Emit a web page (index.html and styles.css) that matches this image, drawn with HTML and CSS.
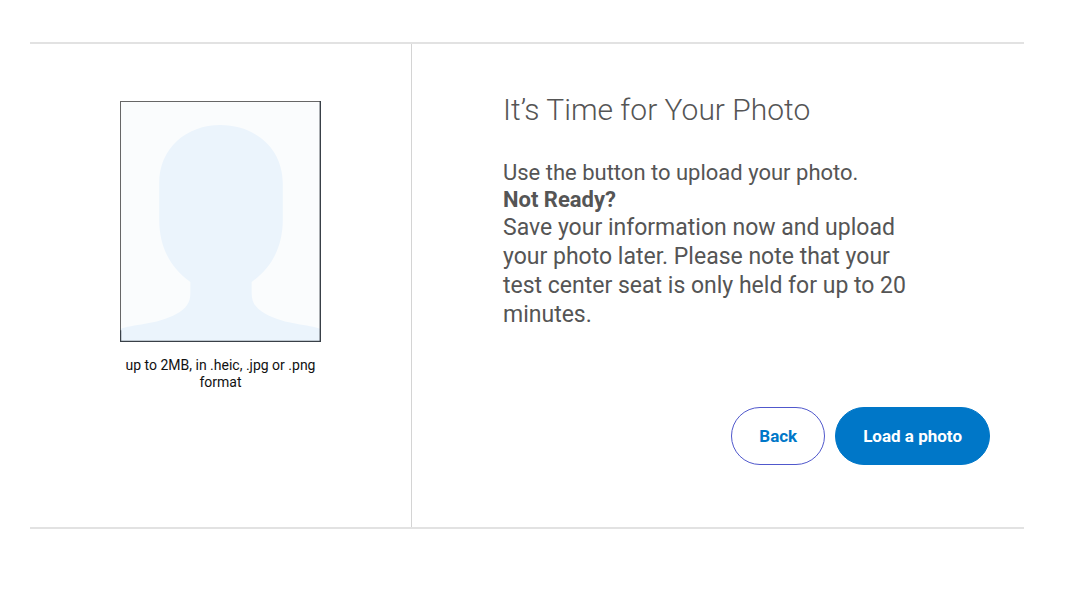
FILE: index.html
```html
<!DOCTYPE html>
<html lang="en">
<head>
<meta charset="utf-8">
<meta name="viewport" content="width=device-width, initial-scale=1">
<title>It’s Time for Your Photo</title>
<link rel="stylesheet" href="styles.css">
</head>
<body>
<main class="panel">
  <section class="preview">
    <figure class="preview-figure">
      <svg class="silhouette" viewBox="0 0 200 240" role="img" aria-label="Photo placeholder">
        <rect width="200" height="240" fill="#fafcfd"/>
        <path fill="#ebf4fc" d="M0 240V227C12 222 36 223 56 212C66 206 70 201 70 191V180C50 166 39 145 39 118V82C39 47 66 24 100 24S162 47 162 82V118C162 145 151 166 131 180V191C131 201 135 206 145 212C165 223 188 222 200 227V240Z"/>
        <path fill="none" stroke="#666" d="M0.5 240V0.5H199.5"/>
        <path fill="none" stroke="#394047" stroke-width="1.4" d="M0.5 228V239.3H199.3V0"/>
      </svg>
      <figcaption class="caption">up to 2MB, in .heic, .jpg or .png format</figcaption>
    </figure>
  </section>
  <section class="content">
    <h1 class="title">It’s Time for Your Photo</h1>
    <div class="message">
      <p class="lead">Use the button to upload your photo.</p>
      <p class="lead"><strong>Not Ready?</strong></p>
      <p class="details">Save your information now and upload your photo later. Please note that your test center seat is only held for up to 20 minutes.</p>
    </div>
    <div class="actions">
      <button class="button button-outline" type="button">Back</button>
      <button class="button button-primary" type="button">Load a photo</button>
    </div>
  </section>
</main>
</body>
</html>
```

FILE: styles.css
```css
* { box-sizing: border-box; }
body {
  margin: 0;
  background: #fff;
  font-family: Roboto, "Liberation Sans", sans-serif;
  color: #555;
}
.panel {
  display: grid;
  grid-template-columns: 382px 1fr;
  margin: 42px 56px 0 30px;
  border-top: 2px solid #e2e2e2;
  border-bottom: 2px solid #e2e2e2;
}
.preview {
  padding: 57px 90px 0;
  border-right: 1px solid #d4d4d4;
}
.preview-figure { margin: 0; }
.silhouette { display: block; width: 100%; }
.caption {
  margin-top: 15px;
  color: #111;
  font-size: 14px;
  line-height: 17px;
  text-align: center;
}
.content { padding: 46px 34px 62px 91px; }
.title {
  margin: 0;
  font-size: 30px;
  font-weight: 300;
  line-height: 40px;
}
.message {
  max-width: 410px;
  margin-top: 29px;
  font-size: 22px;
}
.message p { margin: 0; }
.lead { line-height: 27px; }
.details {
  font-size: 23px;
  line-height: 29px;
}
.actions {
  display: flex;
  justify-content: flex-end;
  gap: 10px;
  margin-top: 78px;
}
.button {
  padding: 18px 27px;
  border: 1px solid #0077c8;
  border-radius: 29px;
  font: 700 17px/20px Roboto, "Liberation Sans", sans-serif;
}
.button-outline { border-color: #5058cc; background: #fff; color: #0077c8; }
.button-primary { background: #0077c8; color: #fff; }
```
